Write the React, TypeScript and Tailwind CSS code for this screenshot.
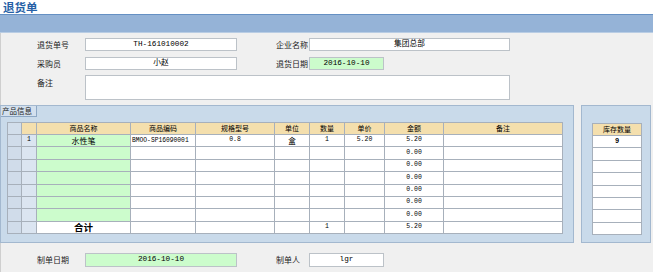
import React from "react";

const cjk = "font-['Noto_Sans_CJK_SC',sans-serif]";
const mono = "font-['Liberation_Mono','Noto_Sans_CJK_SC',monospace]";

const Field = ({ value, w, h = "h-[13px]", green = false }: { value: string; w: string; h?: string; green?: boolean }) => (
  <div
    className={`${w} ${h} ${green ? "bg-[#ccfccc]" : "bg-white"} border border-[#bcc2c8] flex items-center justify-center text-[7.7px] leading-none text-black ${mono}`}
  >
    {value}
  </div>
);

const Label = ({ text, w }: { text: string; w: string }) => (
  <div className={`${w} text-[8px] leading-none text-[#222] ${cjk}`}>{text}</div>
);

const cols = [14, 15, 94, 65, 79, 35, 35, 40, 59, 119];
const headers = ["", "", "商品名称", "商品编码", "规格型号", "单位", "数量", "单价", "金额", "备注"];

type Row = string[];
const rows: Row[] = [
  ["1", "水性笔", "BMOO-SP16090001", "0.8", "盒", "1", "5.20", "5.20", ""],
  ...Array.from({ length: 6 }, () => ["", "", "", "", "", "", "", "0.00", ""]),
];

const cell = "border border-[#a7b0bb] p-0 text-center align-middle leading-none whitespace-nowrap";
const td = `${cell} overflow-hidden`;

const ProductTable = () => (
  <table className={`table-fixed border-collapse w-[555px] ${mono} text-[6.5px] text-black`}>
    <colgroup>
      {cols.map((c, i) => (
        <col key={i} style={{ width: c }} />
      ))}
    </colgroup>
    <tbody>
      <tr className="h-[12px]">
        {headers.map((h, i) => (
          <td key={i} className={`${td} ${i === 0 ? "bg-[#d2deeb]" : "bg-[#f4dfad]"} ${cjk} text-[7px]`}>
            {h}
          </td>
        ))}
      </tr>
      {rows.map((r, ri) => (
        <tr key={ri} className="h-[12.4px]">
          <td className={`${td} bg-[#d0dcea]`} />
          <td className={`${td} bg-[#dbe5f1]`}>{r[0]}</td>
          <td className={`${td} bg-[#ccfccc] ${cjk} text-[8px]`}>{r[1]}</td>
          <td className={`${td} bg-white text-[6.3px] text-left pl-[1px]`}>{r[2]}</td>
          <td className={`${td} bg-white`}>{r[3]}</td>
          <td className={`${td} bg-white ${cjk} text-[7.5px]`}>{r[4]}</td>
          <td className={`${td} bg-white`}>{r[5]}</td>
          <td className={`${td} bg-white`}>{r[6]}</td>
          <td className={`${td} bg-white`}>{r[7]}</td>
          <td className={`${td} bg-white`}>{r[8]}</td>
        </tr>
      ))}
      <tr className="h-[12.4px]">
        <td className={`${td} bg-[#d0dcea]`} />
        <td className={`${td} bg-[#dbe5f1]`} />
        <td className={`${cell} bg-white ${cjk} text-[9.5px] font-bold`}>合计</td>
        <td className={`${td} bg-white`} />
        <td className={`${td} bg-white`} />
        <td className={`${td} bg-white`} />
        <td className={`${td} bg-white`}>1</td>
        <td className={`${td} bg-white`} />
        <td className={`${td} bg-white`}>5.20</td>
        <td className={`${td} bg-white`} />
      </tr>
    </tbody>
  </table>
);

const StockTable = () => (
  <table className={`table-fixed border-collapse w-[50px] ${mono} text-[7px] text-black`}>
    <tbody>
      <tr className="h-[12px]">
        <td className={`${td} bg-[#f4dfad] ${cjk} text-[7px]`}>库存数量</td>
      </tr>
      {Array.from({ length: 8 }, (_, i) => (
        <tr key={i} className="h-[12.4px]">
          <td className={`${td} bg-white font-bold`}>{i === 0 ? "9" : ""}</td>
        </tr>
      ))}
    </tbody>
  </table>
);

export default function App() {
  return (
    <div className="w-[653px] h-[276px] bg-white overflow-hidden">
      <div className={`h-[14px] pl-[3px] text-[11.5px] font-bold leading-[14px] text-[#2560a6] ${cjk}`}>
        退货单
      </div>
      <div className="h-[19px] bg-[#95b3d7] border-t border-[#6590c3] border-b border-b-[#b9cde4]" />

      <div className="h-[239px] bg-[#f0f0f0] border-l border-[#cfcfcf] flex flex-col pt-[5px]">
        <div className="flex items-center pl-[36px] h-[13px]">
          <Label text="退货单号" w="w-[48px]" />
          <Field value="TH-161010002" w="w-[152px]" />
          <div className="w-[39px]" />
          <Label text="企业名称" w="w-[33px]" />
          <Field value="集团总部" w="w-[201px]" />
        </div>
        <div className="flex items-center pl-[36px] h-[13px] mt-[6px]">
          <Label text="采购员" w="w-[48px]" />
          <Field value="小赵" w="w-[152px]" />
          <div className="w-[39px]" />
          <Label text="退货日期" w="w-[33px]" />
          <Field value="2016-10-10" w="w-[75px]" green />
        </div>
        <div className="flex items-start pl-[36px] h-[25px] mt-[5px]">
          <div className="pt-[4px]">
            <Label text="备注" w="w-[48px]" />
          </div>
          <Field value="" w="w-[425px]" h="h-[25px]" />
        </div>

        <div className="flex mt-[5px] h-[138px] -ml-px">
          <div className="w-[574px] h-full bg-[#c9daea] border border-[#a3b8cf] flex flex-col">
            <div className={`w-[36px] h-[11px] bg-[#d3e0ee] border-r border-b border-[#8ea8c5] text-[7.5px] leading-none flex items-center pl-[1px] text-[#222] ${cjk}`}>
              产品信息
            </div>
            <div className="pl-[6px] pt-[5px]">
              <ProductTable />
            </div>
          </div>
          <div className="w-[70px] h-full ml-[7px] bg-[#c9daea] border border-[#a3b8cf] pl-[10px] pt-[17px]">
            <StockTable />
          </div>
        </div>

        <div className="flex items-center pl-[36px] h-[14px] mt-[10px]">
          <Label text="制单日期" w="w-[48px]" />
          <Field value="2016-10-10" w="w-[152px]" h="h-[14px]" green />
          <div className="w-[39px]" />
          <Label text="制单人" w="w-[33px]" />
          <Field value="lgr" w="w-[75px]" h="h-[14px]" />
        </div>
      </div>
    </div>
  );
}
